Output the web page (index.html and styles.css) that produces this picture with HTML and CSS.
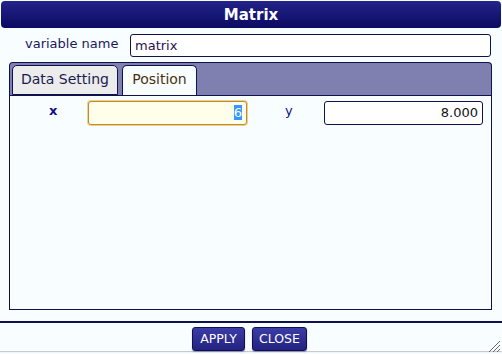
FILE: index.html
```html
<!DOCTYPE html>
<html lang="en">
<head>
    <meta charset="UTF-8">
    <meta name="viewport" content="width=device-width, initial-scale=1.0">
    <title>Matrix</title>
    <link rel="stylesheet" href="styles.css">
</head>

<body>
    <div class="dialog">
        <div class="title-bar">Matrix</div>

        <div class="name-row">
            <div class="name-label">variable name</div>
            <div class="text-box name-box">matrix</div>
        </div>

        <div class="tabs">
            <div class="tab-head">
                <div class="tab">Data Setting</div>
                <div class="tab active">Position</div>
            </div>
            <div class="tab-body">
                <div class="pos-row">
                    <div class="pos-label x-label">x</div>
                    <div class="text-box num-box focused"><span class="sel">6</span></div>
                    <div class="pos-label y-label">y</div>
                    <div class="text-box num-box">8.000</div>
                </div>
            </div>
        </div>

        <div class="footer">
            <div class="btn apply-btn">APPLY</div>
            <div class="btn close-btn">CLOSE</div>
        </div>

        <svg class="grip" width="12" height="12" viewBox="0 0 12 12">
            <line x1="1" y1="12" x2="12" y2="1" stroke="#666" stroke-width="1"/>
            <line x1="5" y1="12" x2="12" y2="5" stroke="#666" stroke-width="1"/>
            <line x1="9" y1="12" x2="12" y2="9" stroke="#666" stroke-width="1"/>
        </svg>
    </div>
</body>

</html>
```

FILE: styles.css
```css
html,
body {
    margin: 0;
    background-color: #f8fdff;
}

.dialog {
    position: relative;
    width: 502px;
    height: 354px;
    display: flex;
    flex-direction: column;
    font-family: "DejaVu Sans", Verdana, sans-serif;
    font-size: 13px;
    color: #1a1a5a;
}

.title-bar {
    margin: 1px 1px 0 1px;
    height: 27px;
    line-height: 28px;
    border-radius: 4px;
    background: linear-gradient(#23238a, #0b0b62);
    color: #fff;
    font-weight: bold;
    font-size: 15px;
    text-align: center;
}

.name-row {
    display: flex;
    align-items: center;
    margin-top: 6px;
    padding-left: 25px;
}

.name-label {
    width: 105px;
    margin-top: -4px;
}

.text-box {
    box-sizing: border-box;
    height: 23px;
    line-height: 21px;
    border: 1px solid #111150;
    border-radius: 3px;
    background-color: #fff;
    padding: 0 4px;
}

.name-box {
    width: 361px;
    color: #2a1050;
}

.tabs {
    margin: 5px 10px 0 9px;
    height: 248px;
    display: flex;
    flex-direction: column;
}

.tab-head {
    display: flex;
    gap: 4px;
    height: 30px;
    padding: 2px 0 0 2px;
    background-color: #8080b0;
    border: 1px solid #111150;
    border-bottom: none;
    border-radius: 4px 4px 0 0;
}

.tab {
    box-sizing: border-box;
    width: 106px;
    height: 30px;
    line-height: 26px;
    text-align: center;
    font-size: 14px;
    background-color: #ececec;
    border: 1px solid #111150;
    border-radius: 5px 5px 0 0;
    color: #1a1a50;
}

.tab.active {
    width: 75px;
    height: 31px;
    background-color: #f8fdff;
    border-bottom: none;
    color: #4a3010;
}

.tab-body {
    flex: 1;
    border: 1px solid #111150;
    background-color: #f8fdff;
}

.pos-row {
    display: flex;
    align-items: center;
    padding: 5px 0 0 39px;
}

.pos-label {
    margin-top: -6px;
}

.x-label {
    width: 39px;
    font-weight: bold;
    color: #10108a;
}

.y-label {
    width: 39px;
    margin-left: 38px;
    color: #10108a;
}

.num-box {
    width: 159px;
    height: 24px;
    line-height: 22px;
    text-align: right;
    color: #111;
}

.num-box.focused {
    border-color: #c08a30;
    background-color: #fffeea;
    box-shadow: 0 0 0 1px #f0d090;
}

.sel {
    background-color: #3399ff;
    color: #fff;
}

.footer {
    margin-top: 11px;
    border-top: 2px solid #111150;
    box-shadow: 0 1px 1px #c8c8d8;
    display: flex;
    justify-content: center;
    gap: 7px;
    padding: 4px 3px 0 0;
}

.btn {
    box-sizing: border-box;
    height: 24px;
    line-height: 22px;
    text-align: center;
    border: 1px solid #0e0e50;
    border-radius: 3px;
    background: linear-gradient(#3c3ca8, #222280);
    color: #fff;
    font-size: 12.5px;
    box-shadow: 0 1px 1px #8888aa;
}

.apply-btn {
    width: 53px;
}

.close-btn {
    width: 55px;
}

.grip {
    position: absolute;
    right: 2px;
    bottom: 2px;
}
```
